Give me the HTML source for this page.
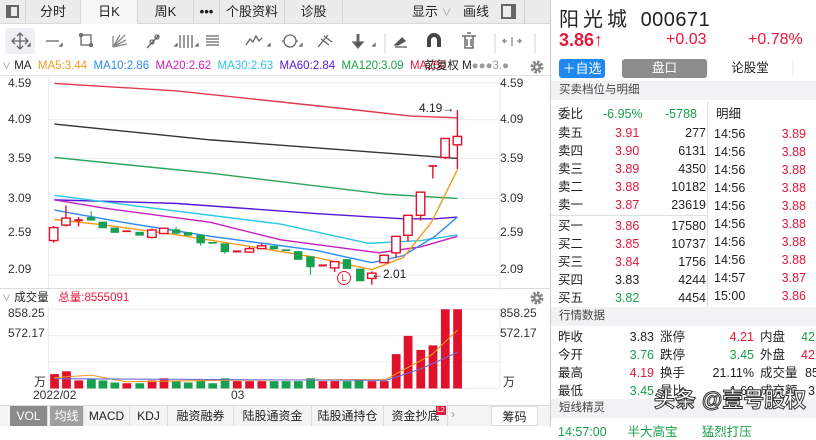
<!DOCTYPE html>
<html><head><meta charset="utf-8"><style>
*{margin:0;padding:0;box-sizing:border-box}
body{width:816px;height:426px;overflow:hidden;background:#fff;font-family:"Liberation Sans","Noto Sans CJK SC",sans-serif;position:relative;color:#222}
.a{position:absolute;white-space:nowrap}
.r{color:#e5173a}.g{color:#1a9e4a}
.tabs{left:0;top:0;width:550px;height:24px;background:#ececec;border-bottom:1px solid #d8d8d8}
.tab{position:absolute;top:0;height:24px;line-height:24px;font-size:13px;text-align:center;border-right:1px solid #d6d6d6}
.ax{font-size:12px;color:#333}
.rp{left:551px;width:265px}
.hd{background:#f2f2f4;font-size:11.5px;color:#444;height:19px;line-height:19px;padding-left:8px}
.row{font-size:12.5px;height:18px;line-height:18px}
.bt{position:absolute;top:406px;height:20px;line-height:20px;font-size:12px;text-align:center;border-right:1px solid #ddd}
</style></head><body>
<div class="a tabs">
 <div class="tab" style="left:0;width:26px;"><span style="display:inline-block;width:13px;height:13px;border:2px solid #666;margin-top:5px;border-left-width:5px"></span></div>
 <div class="tab" style="left:26px;width:55px">分时</div>
 <div class="tab" style="left:81px;width:57px;background:#f6f6f6">日K</div>
 <div class="tab" style="left:138px;width:56px">周K</div>
 <div class="tab" style="left:194px;width:26px;font-weight:bold">•••</div>
 <div class="tab" style="left:220px;width:65px">个股资料</div>
 <div class="tab" style="left:285px;width:58px">诊股</div>
 <div class="a" style="left:412px;top:0;line-height:24px;font-size:13px">显示 <span style="color:#999;font-size:10px">∨</span></div>
 <div class="a" style="left:463px;top:0;line-height:24px;font-size:13px">画线</div>
 <div class="a" style="left:501px;top:4px;width:15px;height:15px;border:2px solid #666;border-right-width:5px"></div>
 <div class="a" style="left:524px;top:0;width:1px;height:24px;background:#d0d0d0"></div>
</div>
<div class="a" style="left:5px;top:28px;width:30px;height:26px;background:#eef0f4;border-radius:3px"></div>
<svg class="a" style="left:0;top:25px" width="550" height="33" viewBox="0 0 550 33" fill="none" stroke="#666" stroke-width="1.3">
 <path d="M12 16h16M20 8v16M17 11l3-3 3 3M17 21l3 3 3-3M15 13l-3 3 3 3M25 13l3 3-3 3"/>
 <path d="M46 16h13"/><path d="M60 21l2-2v2z" fill="#666"/>
 <rect x="81" y="10" width="10" height="10"/><circle cx="81" cy="10" r="1.5"/><circle cx="91" cy="20" r="1.5"/>
 <path d="M113 22l12-12M113 22l13-7M113 22l14-3M113 22v-11M113 22l7-12" stroke="#888"/>
 <path d="M147 23l12-13"/><circle cx="152" cy="17" r="2"/><circle cx="157" cy="12" r="2"/>
 <path d="M180 10v13M184 10v13M188 10v13M192 10v13"/>
 <path d="M206 11h13M206 14h13M206 17h13M206 20h13"/>
 <path d="M246 20l4-6 3 3 3-6 3 5 3-3"/>
 <circle cx="290" cy="16" r="6"/><path d="M282 16h2M296 16h2"/>
 <path d="M318 22l10-12M321 14l8 6M324 11l8 6"/>
 <path d="M358 9v10" stroke-width="3"/><path d="M353 17l5 6 5-6z" fill="#555"/>
 <path d="M385 8v20" stroke="#ddd"/>
 <path d="M395 20l7-7 3 3-7 4zM395 22h12" stroke="#555" fill="#555"/>
 <path d="M429 22v-7a5 5 0 0110 0v7" stroke="#444" stroke-width="4"/>
 <path d="M462 11h14M465 11v12h8v-12M467 8h4M467 14v7M471 14v7" stroke="#555"/>
 <path d="M495 8v20" stroke="#ddd"/>
 <path d="M512 12v9M507 16h-4M517 16h4M505 14l-2 2 2 2M519 14l2 2-2 2" stroke="#888"/>
 <path d="M535 8v20" stroke="#ddd"/>
 <path d="M28 21l2-2v2zM175 21l2-2v2zM196 21l2-2v2zM268 21l2-2v2zM300 21l2-2v2zM373 21l2-2v2z" fill="#666"/>
</svg>
<div class="a" style="left:2px;top:58px;height:17px;line-height:17px;font-size:11.5px;width:550px">
<span style="color:#888;font-size:9px">∨</span> MA&nbsp; <span style="color:#f29a1e">MA5:3.44</span>&nbsp; <span style="color:#2e8cf0">MA10:2.86</span>&nbsp; <span style="color:#d21ec0">MA20:2.62</span>&nbsp; <span style="color:#2ac7e0">MA30:2.63</span>&nbsp; <span style="color:#5a16d8">MA60:2.84</span>&nbsp; <span style="color:#1aa14a">MA120:3.09</span>&nbsp; <span class="r">MA250</span><span style="margin-left:-22px">前复权 M</span><span style="color:#999">●●●3.●</span>
</div>
<svg class="a" style="left:530px;top:60px" width="14" height="14" viewBox="0 0 14 14"><circle cx="7" cy="7" r="5" fill="none" stroke="#888" stroke-width="3" stroke-dasharray="2.5 1.4"/><circle cx="7" cy="7" r="4" fill="#888"/><circle cx="7" cy="7" r="1.6" fill="#fff"/></svg>
<div class="a" style="left:0;top:75px;width:550px;height:1px;background:#e4e4e4"></div>
<div class="a ax" style="left:8px;top:76px">4.59</div><div class="a ax" style="left:500px;top:76px">4.59</div>
<div class="a ax" style="left:8px;top:112px">4.09</div><div class="a ax" style="left:500px;top:112px">4.09</div>
<div class="a ax" style="left:8px;top:151px">3.59</div><div class="a ax" style="left:500px;top:151px">3.59</div>
<div class="a ax" style="left:8px;top:191px">3.09</div><div class="a ax" style="left:500px;top:191px">3.09</div>
<div class="a ax" style="left:8px;top:225px">2.59</div><div class="a ax" style="left:500px;top:225px">2.59</div>
<div class="a ax" style="left:8px;top:262px">2.09</div><div class="a ax" style="left:500px;top:262px">2.09</div>
<svg class="a" style="left:0;top:75px" width="550" height="215" viewBox="0 0 1568 613" preserveAspectRatio="none">
<g stroke="#ececec" stroke-width="3"><path d="M138 22H1425M138 127H1425M138 238H1425M138 352H1425M138 465H1425M138 570H1425"/><path d="M138 0V613M1425 0V613"/></g>
<g fill="none" stroke-width="4">
<polyline stroke="#e23a4e" points="155,24 500,45 1000,98 1170,117 1304,122"/>
<polyline stroke="#333" points="155,140 600,185 1000,215 1304,238"/>
<polyline stroke="#2aa35a" points="155,235 600,280 1100,340 1304,352"/>
<polyline stroke="#5a16d8" points="155,356 500,366 900,395 1150,410 1240,410 1304,405"/>
<polyline stroke="#2ac7e0" points="155,343 400,375 800,425 1050,480 1200,472 1304,456"/>
<polyline stroke="#c81ec0" points="155,356 300,380 600,420 800,470 1080,507 1200,490 1304,460"/>
<polyline stroke="#2e8cf0" points="155,385 350,420 600,460 900,500 1060,535 1150,515 1240,460 1304,405"/>
<polyline stroke="#f29a1e" points="155,412 300,428 500,455 750,495 900,520 1060,555 1150,520 1230,420 1304,270"/>
</g>
<g stroke="#e0112b" stroke-width="4" fill="#fff">
<path d="M153 430V478M188 372V432M224 405V432M433 438V466M711 490V505M746 480V495M954 532V562M1060 560V598M1129 507V522M1163 457V475M1199 400V415M1234 258V295M1269 235V240M1304 100V268" />
<rect x="141" y="435" width="24" height="37"/><rect x="176" y="408" width="24" height="20"/>
<rect x="421" y="442" width="24" height="21"/><rect x="455" y="437" width="24" height="15"/>
<rect x="699" y="495" width="24" height="10"/><rect x="734" y="487" width="24" height="8"/>
<rect x="942" y="532" width="24" height="18"/><rect x="1048" y="565" width="24" height="15"/>
<rect x="1083" y="514" width="24" height="21"/><rect x="1117" y="460" width="24" height="47"/>
<rect x="1151" y="400" width="24" height="57"/><rect x="1187" y="334" width="24" height="66"/>
<rect x="1257" y="181" width="24" height="54"/><rect x="1292" y="175" width="24" height="24"/>
</g>
<g fill="#e0112b"><rect x="212" y="411" width="24" height="6"/><rect x="349" y="443" width="24" height="5"/><rect x="664" y="500" width="24" height="6"/><rect x="908" y="540" width="24" height="6"/><rect x="1222" y="257" width="24" height="5"/></g>
<g stroke="#18a050" stroke-width="3"><path d="M260 388V415M502 433V455M572 455V487M641 480V510M885 517V570"/></g>
<g fill="#18a050">
<rect x="248" y="405" width="24" height="10"/><rect x="281" y="418" width="24" height="19"/><rect x="315" y="435" width="24" height="15"/><rect x="386" y="447" width="24" height="11"/><rect x="490" y="440" width="24" height="12"/><rect x="524" y="448" width="24" height="10"/><rect x="560" y="455" width="24" height="25"/><rect x="594" y="476" width="24" height="5"/><rect x="629" y="480" width="24" height="25"/><rect x="769" y="487" width="24" height="10"/><rect x="803" y="497" width="24" height="5"/><rect x="838" y="502" width="24" height="25"/><rect x="873" y="517" width="24" height="31"/><rect x="977" y="525" width="24" height="28"/><rect x="1015" y="552" width="24" height="36"/>
</g>
</svg>
<div class="a" style="left:419px;top:101px;font-size:12px">4.19→</div>
<div class="a" style="left:371px;top:267px;font-size:12px">←2.01</div>
<div class="a" style="left:337px;top:271px;width:14px;height:14px;border:1px solid #e5173a;border-radius:50%;color:#e5173a;font-size:9px;line-height:12px;text-align:center">L</div>
<div class="a" style="left:0;top:288px;width:550px;height:1px;background:#ddd"></div>
<div class="a" style="left:2px;top:290px;font-size:11.5px;line-height:16px"><span style="color:#888;font-size:9px">∨</span> 成交量&nbsp;&nbsp; <span class="r">总量:8555091</span></div>
<svg class="a" style="left:530px;top:291px" width="14" height="14" viewBox="0 0 14 14"><circle cx="7" cy="7" r="5" fill="none" stroke="#888" stroke-width="3" stroke-dasharray="2.5 1.4"/><circle cx="7" cy="7" r="4" fill="#888"/><circle cx="7" cy="7" r="1.6" fill="#fff"/></svg>
<div class="a ax" style="left:8px;top:306px">858.25</div><div class="a ax" style="left:500px;top:306px">858.25</div>
<div class="a ax" style="left:8px;top:326px">572.17</div><div class="a ax" style="left:500px;top:326px">572.17</div>
<div class="a ax" style="left:34px;top:373px">万</div><div class="a ax" style="left:503px;top:373px">万</div>
<div class="a ax" style="left:33px;top:388px">2022/02</div><div class="a ax" style="left:231px;top:388px">03</div>
<svg class="a" style="left:0;top:290px" width="550" height="116" viewBox="0 0 1568 331" preserveAspectRatio="none">
<g stroke="#ececec" stroke-width="3"><path d="M138 55H1425M138 130H1425M138 205H1425M138 281H1425M138 48V281M1425 48V281"/></g>
<g fill="#e0112b">
<rect x="143" y="240" width="25" height="41"/><rect x="177" y="232" width="25" height="49"/><rect x="212" y="258" width="25" height="23"/><rect x="349" y="266" width="25" height="15"/><rect x="421" y="258" width="25" height="23"/><rect x="455" y="252" width="25" height="29"/><rect x="664" y="260" width="25" height="21"/><rect x="699" y="260" width="25" height="21"/><rect x="734" y="260" width="25" height="21"/><rect x="908" y="260" width="25" height="21"/><rect x="942" y="260" width="25" height="21"/><rect x="1048" y="260" width="25" height="21"/><rect x="1083" y="260" width="25" height="21"/><rect x="1117" y="183" width="25" height="98"/><rect x="1151" y="131" width="25" height="150"/><rect x="1187" y="171" width="25" height="110"/><rect x="1222" y="158" width="25" height="123"/><rect x="1257" y="55" width="25" height="226"/><rect x="1292" y="55" width="25" height="226"/>
</g>
<g fill="#18a050">
<rect x="248" y="253" width="25" height="28"/><rect x="281" y="258" width="25" height="23"/><rect x="315" y="264" width="25" height="17"/><rect x="386" y="266" width="25" height="15"/><rect x="490" y="260" width="25" height="21"/><rect x="524" y="264" width="25" height="17"/><rect x="560" y="258" width="25" height="23"/><rect x="594" y="266" width="25" height="15"/><rect x="629" y="252" width="25" height="29"/><rect x="769" y="260" width="25" height="21"/><rect x="803" y="260" width="25" height="21"/><rect x="838" y="260" width="25" height="21"/><rect x="873" y="252" width="25" height="29"/><rect x="977" y="260" width="25" height="21"/><rect x="1011" y="258" width="25" height="23"/>
</g>
<g fill="none" stroke-width="3">
<polyline stroke="#f29a1e" points="155,250 260,243 360,262 600,258 1100,255 1230,185 1304,115"/>
<polyline stroke="#6a6adf" points="155,253 1100,258 1200,225 1304,178"/>
</g>
</svg>
<div class="a" style="left:0;top:405px;width:550px;height:21px;background:#f4f4f4;border-top:1px solid #ddd"></div>
<div class="bt" style="left:10px;width:38px;background:#8a8a8a;color:#fff">VOL</div>
<div class="bt" style="left:50px;width:34px;background:#a0a0a0;color:#fff">均线</div>
<div class="bt" style="left:84px;width:46px">MACD</div>
<div class="bt" style="left:130px;width:38px">KDJ</div>
<div class="bt" style="left:168px;width:66px">融资融券</div>
<div class="bt" style="left:234px;width:78px">陆股通资金</div>
<div class="bt" style="left:312px;width:72px">陆股通持仓</div>
<div class="bt" style="left:384px;width:64px">资金抄底</div>
<div class="a" style="left:436px;top:406px;background:#e5173a;color:#fff;font-size:7px;line-height:9px;padding:0 1px">L2</div>
<div class="a" style="left:451px;top:407px;color:#999;font-size:12px">›</div>
<div class="bt" style="left:491px;width:47px;background:#fff;border:1px solid #ddd">筹码</div>
<div class="a" style="left:550px;top:0;width:1px;height:426px;background:#ccc"></div>
<div class="a" style="left:559px;top:3px;font-size:20px;letter-spacing:4px">阳光城 <span style="letter-spacing:0.5px">000671</span></div>
<div class="a r" style="left:559px;top:30px;font-size:18px;font-weight:bold">3.86<span style="font-weight:normal">↑</span></div>
<div class="a r" style="left:666px;top:31px;font-size:16px">+0.03</div>
<div class="a r" style="left:748px;top:31px;font-size:16px">+0.78%</div>
<div class="a" style="left:559px;top:59px;width:46px;height:19px;background:#1e88f0;color:#fff;border-radius:3px;font-size:13px;line-height:19px;text-align:center">＋自选</div>
<div class="a" style="left:622px;top:59px;width:172px;height:19px;background:#f4f4f4;border-radius:3px"></div>
<div class="a" style="left:622px;top:59px;width:85px;height:19px;background:#8c8c8c;color:#fff;border-radius:3px;font-size:12.5px;line-height:19px;text-align:center">盘口</div>
<div class="a" style="left:708px;top:59px;width:84px;height:19px;background:#fff;font-size:12.5px;line-height:19px;text-align:center">论股堂</div>
<div class="a rp hd" style="top:81px">买卖档位与明细</div>
<div class="a" style="left:707px;top:101px;width:1px;height:206px;background:#e0e0e0"></div>
<div class="a" style="left:551px;top:215px;width:156px;height:1px;background:#e0e0e0"></div>
<div class="a row" style="left:558px;top:105px">委比</div><div class="a row g" style="left:603px;top:105px">-6.95%</div><div class="a row g" style="left:665px;top:105px">-5788</div><div class="a row" style="left:716px;top:105px">明细</div>
<div class="a" style="left:558px;top:124px;width:148px;font-size:12.5px;line-height:18px">
<div style="position:relative;height:18px">卖五<span class="a r" style="left:57px">3.91</span><span class="a" style="right:0">277</span></div>
<div style="position:relative;height:18px">卖四<span class="a r" style="left:57px">3.90</span><span class="a" style="right:0">6131</span></div>
<div style="position:relative;height:18px">卖三<span class="a r" style="left:57px">3.89</span><span class="a" style="right:0">4350</span></div>
<div style="position:relative;height:18px">卖二<span class="a r" style="left:57px">3.88</span><span class="a" style="right:0">10182</span></div>
<div style="position:relative;height:18px">卖一<span class="a r" style="left:57px">3.87</span><span class="a" style="right:0">23619</span></div>
<div style="position:relative;height:18px;margin-top:3px">买一<span class="a r" style="left:57px">3.86</span><span class="a" style="right:0">17580</span></div>
<div style="position:relative;height:18px">买二<span class="a r" style="left:57px">3.85</span><span class="a" style="right:0">10737</span></div>
<div style="position:relative;height:18px">买三<span class="a r" style="left:57px">3.84</span><span class="a" style="right:0">1756</span></div>
<div style="position:relative;height:18px">买四<span class="a" style="left:57px">3.83</span><span class="a" style="right:0">4244</span></div>
<div style="position:relative;height:18px">买五<span class="a g" style="left:57px">3.82</span><span class="a" style="right:0">4454</span></div>
</div>
<div class="a" style="left:714px;top:125px;width:92px;font-size:12.5px;line-height:18px">
<div style="position:relative;height:18px">14:56<span class="a r" style="right:0">3.89</span></div>
<div style="position:relative;height:18px">14:56<span class="a r" style="right:0">3.88</span></div>
<div style="position:relative;height:18px">14:56<span class="a r" style="right:0">3.88</span></div>
<div style="position:relative;height:18px">14:56<span class="a r" style="right:0">3.88</span></div>
<div style="position:relative;height:18px">14:56<span class="a r" style="right:0">3.88</span></div>
<div style="position:relative;height:18px">14:56<span class="a r" style="right:0">3.88</span></div>
<div style="position:relative;height:18px">14:56<span class="a r" style="right:0">3.88</span></div>
<div style="position:relative;height:18px">14:56<span class="a r" style="right:0">3.88</span></div>
<div style="position:relative;height:18px">14:57<span class="a r" style="right:0">3.87</span></div>
<div style="position:relative;height:18px">15:00<span class="a r" style="right:0">3.86</span></div>
</div>
<div class="a rp hd" style="top:307px">行情数据</div>
<div class="a" style="left:558px;top:328px;width:258px;font-size:12.5px;line-height:18px">
<div style="position:relative;height:18px">昨收<span class="a" style="right:162px">3.83</span><span class="a" style="left:102px">涨停</span><span class="a r" style="right:62px">4.21</span><span class="a" style="left:202px">内盘</span><span class="a g" style="left:243px">42</span></div>
<div style="position:relative;height:18px">今开<span class="a g" style="right:162px">3.76</span><span class="a" style="left:102px">跌停</span><span class="a g" style="right:62px">3.45</span><span class="a" style="left:202px">外盘</span><span class="a r" style="left:243px">42</span></div>
<div style="position:relative;height:18px">最高<span class="a r" style="right:162px">4.19</span><span class="a" style="left:102px">换手</span><span class="a" style="right:62px">21.11%</span><span class="a" style="left:202px">成交量</span><span class="a" style="left:247px">85</span></div>
<div style="position:relative;height:18px">最低<span class="a g" style="right:162px">3.45</span><span class="a" style="left:102px">量比</span><span class="a" style="right:62px">1.60</span><span class="a" style="left:202px">成交额</span><span class="a" style="left:250px">3</span></div>
</div>
<div class="a rp hd" style="top:399px">短线精灵</div>
<div class="a g" style="left:558px;top:421px;font-size:12.5px">14:57:00&nbsp;&nbsp;&nbsp;&nbsp;&nbsp; 半大高宝&nbsp;&nbsp;&nbsp;&nbsp;&nbsp;&nbsp; 猛烈打压</div>
<div class="a" style="left:654px;top:384px;font-size:21px;color:#fff;-webkit-text-stroke:1px #333;font-weight:bold">头条 @壹号股权</div>
</body></html>
